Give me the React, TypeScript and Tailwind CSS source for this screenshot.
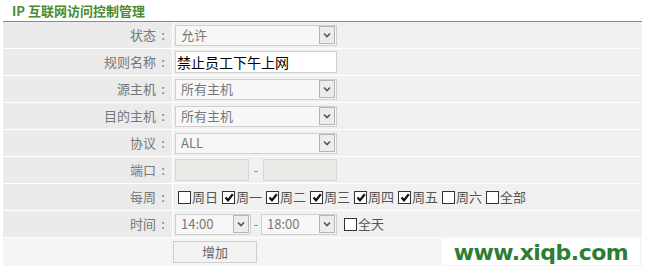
const font = { fontFamily: '"Microsoft YaHei", "Noto Sans CJK SC", "Noto Sans", sans-serif' };

function Arrow() {
  return (
    <span className="flex h-[18px] w-[16px] items-center justify-center border border-[#b5b5b5] bg-[#ececec]">
      <svg width="8" height="6" viewBox="0 0 8 6">
        <polyline points="1,1.5 4,4.5 7,1.5" fill="none" stroke="#555" strokeWidth="1.6" />
      </svg>
    </span>
  );
}

function Select({ value, w }: { value: string; w: string }) {
  return (
    <div className={`flex h-[21px] items-center justify-between border border-[#cfcfcf] bg-[#f7f7f7] pl-[5px] pr-[1px] ${w}`}>
      <span className="text-[13px] text-[#777]">{value}</span>
      <Arrow />
    </div>
  );
}

function Box({ checked }: { checked?: boolean }) {
  return (
    <span className="flex h-[13px] w-[13px] items-center justify-center border border-[#333] bg-white">
      {checked && (
        <svg width="10" height="9" viewBox="0 0 10 9">
          <polyline points="1.5,4.5 4,7.2 8.8,1.2" fill="none" stroke="#111" strokeWidth="2.2" />
        </svg>
      )}
    </span>
  );
}

function Row({ label, children }: { label: string; children: React.ReactNode }) {
  return (
    <div className="flex h-[27px] border-b border-white">
      <div className="flex w-[169px] items-center justify-end bg-[#ebebeb] pr-[2px] text-[13px] text-[#777]">
        {label}
        <span className="w-[14px] text-center">:</span>
      </div>
      <div className="flex flex-1 items-center border-l border-white bg-[#f1f1f1] pl-[2px]">{children}</div>
    </div>
  );
}

const days: [string, boolean][] = [
  ["周日", false],
  ["周一", true],
  ["周二", true],
  ["周三", true],
  ["周四", true],
  ["周五", true],
  ["周六", false],
  ["全部", false],
];

export default function App() {
  return (
    <div className="h-[266px] w-[645px] overflow-hidden bg-white" style={font}>
      <div className="flex h-[21px] items-center pl-[12px] text-[13px] font-bold text-[#4a8c30]">
        IP 互联网访问控制管理
      </div>
      <div className="mx-[3px] border-t border-[#6aa84f]">
        <Row label="状态">
          <Select value="允许" w="w-[162px]" />
        </Row>
        <Row label="规则名称">
          <div className="flex h-[22px] w-[162px] items-center border border-[#cfcfcf] bg-white pl-[1px] text-[14px] text-black">
            禁止员工下午上网
          </div>
        </Row>
        <Row label="源主机">
          <Select value="所有主机" w="w-[162px]" />
        </Row>
        <Row label="目的主机">
          <Select value="所有主机" w="w-[162px]" />
        </Row>
        <Row label="协议">
          <Select value="ALL" w="w-[162px]" />
        </Row>
        <Row label="端口">
          <div className="h-[22px] w-[74px] border border-[#d6d6d6] bg-[#ebebe7]" />
          <span className="w-[14px] text-center text-[13px] text-[#888]">-</span>
          <div className="h-[22px] w-[74px] border border-[#d6d6d6] bg-[#ebebe7]" />
        </Row>
        <Row label="每周">
          <div className="flex items-center gap-[4px] pl-[3px] text-[13px] text-[#555]">
            {days.map(([d, c]) => (
              <span key={d} className="flex items-center gap-[1px]">
                <Box checked={c} />
                <span>{d}</span>
              </span>
            ))}
          </div>
        </Row>
        <Row label="时间">
          <Select value="14:00" w="w-[76px]" />
          <span className="w-[10px] text-center text-[13px] text-[#888]">-</span>
          <Select value="18:00" w="w-[76px]" />
          <span className="ml-[7px] flex items-center gap-[1px] text-[13px] text-[#555]">
            <Box />
            全天
          </span>
        </Row>
        <div className="flex h-[28px] bg-[#f5f5f5]">
          <div className="w-[170px]" />
          <div className="flex flex-1 items-center justify-between">
            <button className="h-[22px] w-[84px] border border-[#cfcfcf] bg-[#f3f3f3] text-[13px] text-[#666]">增加</button>
            <div className="mr-[2px] flex h-[26px] w-[198px] items-center justify-center bg-white">
              <span className="text-[22px] font-bold tracking-[-0.5px] text-[#2e7d32]" style={{ fontFamily: '"DejaVu Sans", sans-serif' }}>
                www.xiqb.com
              </span>
            </div>
          </div>
        </div>
      </div>
    </div>
  );
}
